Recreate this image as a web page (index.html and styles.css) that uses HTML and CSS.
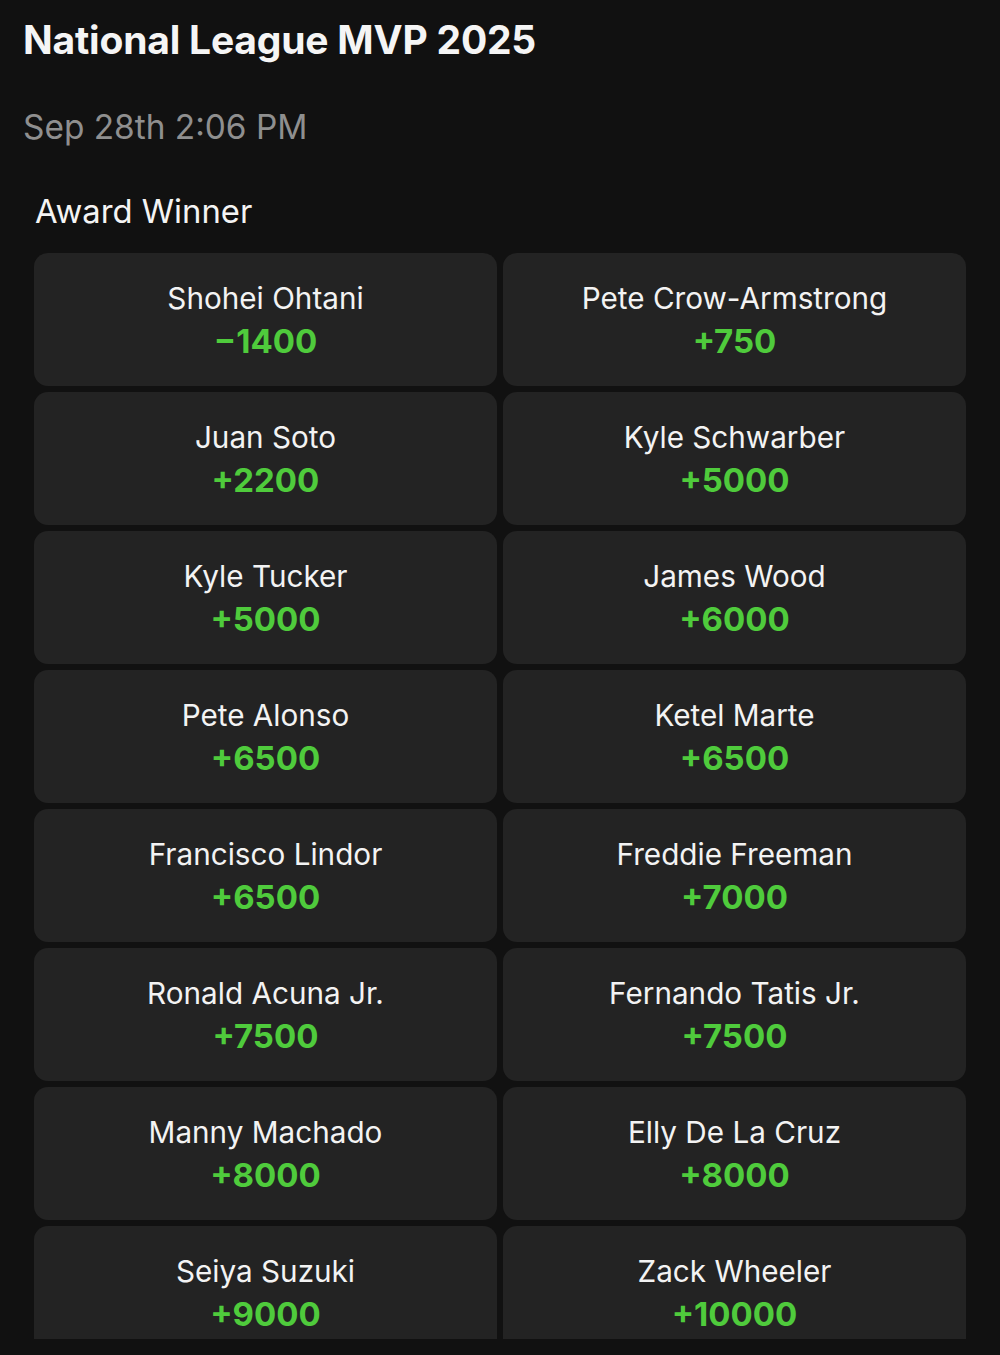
FILE: index.html
```html
<!DOCTYPE html>
<html lang="en">
<head>
<meta charset="utf-8">
<title>National League MVP 2025</title>
<link rel="stylesheet" href="styles.css">
</head>
<body>
<main class="page">
  <h1 class="title">National League MVP 2025</h1>
  <p class="date">Sep 28th 2:06 PM</p>
  <h2 class="market">Award Winner</h2>
  <div class="grid-clip">
    <div class="grid">
      <div class="cell"><span class="name">Shohei Ohtani</span><span class="odds">−1400</span></div>
      <div class="cell"><span class="name">Pete Crow-Armstrong</span><span class="odds">+750</span></div>
      <div class="cell"><span class="name">Juan Soto</span><span class="odds">+2200</span></div>
      <div class="cell"><span class="name">Kyle Schwarber</span><span class="odds">+5000</span></div>
      <div class="cell"><span class="name">Kyle Tucker</span><span class="odds">+5000</span></div>
      <div class="cell"><span class="name">James Wood</span><span class="odds">+6000</span></div>
      <div class="cell"><span class="name">Pete Alonso</span><span class="odds">+6500</span></div>
      <div class="cell"><span class="name">Ketel Marte</span><span class="odds">+6500</span></div>
      <div class="cell"><span class="name">Francisco Lindor</span><span class="odds">+6500</span></div>
      <div class="cell"><span class="name">Freddie Freeman</span><span class="odds">+7000</span></div>
      <div class="cell"><span class="name">Ronald Acuna Jr.</span><span class="odds">+7500</span></div>
      <div class="cell"><span class="name">Fernando Tatis Jr.</span><span class="odds">+7500</span></div>
      <div class="cell"><span class="name">Manny Machado</span><span class="odds">+8000</span></div>
      <div class="cell"><span class="name">Elly De La Cruz</span><span class="odds">+8000</span></div>
      <div class="cell"><span class="name">Seiya Suzuki</span><span class="odds">+9000</span></div>
      <div class="cell"><span class="name">Zack Wheeler</span><span class="odds">+10000</span></div>
    </div>
  </div>
</main>
</body>
</html>
```

FILE: styles.css
```css
html, body {
  margin: 0;
  padding: 0;
  background: #111111;
  height: 100%;
  overflow: hidden;
}
body {
  font-family: Inter, "Noto Sans", "Liberation Sans", sans-serif;
  color: #f2f2f2;
}
.page {
  padding: 0 34px 0 23px;
}
.title {
  margin: 0;
  padding-top: 17px;
  font-size: 39px;
  font-weight: 700;
  line-height: 46px;
  color: #f5f5f5;
  letter-spacing: -0.2px;
}
.date {
  margin: 0;
  padding-top: 44px;
  font-size: 33.4px;
  line-height: 40px;
  color: #8f8f8f;
  font-weight: 400;
}
.market {
  margin: 0;
  padding: 44px 0 0 12px;
  font-size: 32.8px;
  line-height: 40px;
  font-weight: 400;
  color: #f4f4f4;
}
.grid-clip {
  margin: 22px 0 0 11px;
  height: 1086px;
  overflow: hidden;
}
.grid {
  display: grid;
  grid-template-columns: 1fr 1fr;
  gap: 6px;
}
.cell {
  background: #232323;
  border-radius: 14px;
  height: 133px;
  display: flex;
  flex-direction: column;
  align-items: center;
  justify-content: center;
  gap: 4px;
}
.name {
  font-size: 29.7px;
  line-height: 38px;
  color: #f3f3f3;
}
.odds {
  font-size: 33px;
  line-height: 40px;
  font-weight: 700;
  color: #4fcb3c;
}
```
